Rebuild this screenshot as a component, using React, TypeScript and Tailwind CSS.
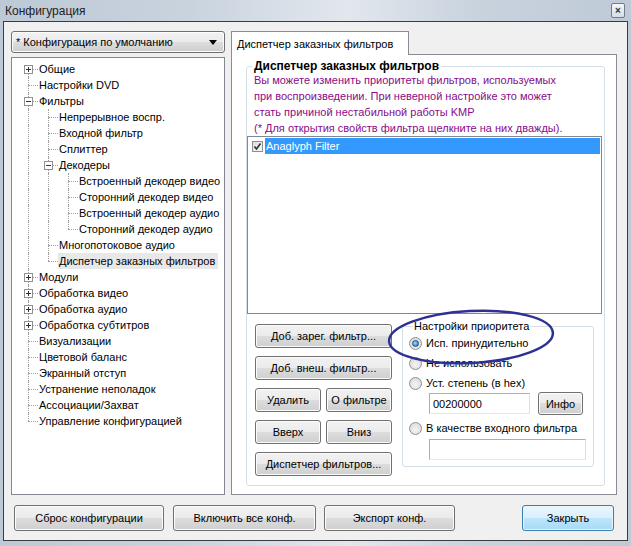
import React from 'react'

type TreeNode = { t: string; box?: '+' | '-'; sel?: boolean; c?: TreeNode[] }

type Row = {
  t: string
  depth: number
  first: boolean
  last: boolean
  anc: boolean[]
  box?: '+' | '-'
  sel?: boolean
}

const tree: TreeNode[] = [
  { t: 'Общие', box: '+' },
  { t: 'Настройки DVD' },
  {
    t: 'Фильтры',
    box: '-',
    c: [
      { t: 'Непрерывное воспр.' },
      { t: 'Входной фильтр' },
      { t: 'Сплиттер' },
      {
        t: 'Декодеры',
        box: '-',
        c: [
          { t: 'Встроенный декодер видео' },
          { t: 'Сторонний декодер видео' },
          { t: 'Встроенный декодер аудио' },
          { t: 'Сторонний декодер аудио' },
        ],
      },
      { t: 'Многопотоковое аудио' },
      { t: 'Диспетчер заказных фильтров', sel: true },
    ],
  },
  { t: 'Модули', box: '+' },
  { t: 'Обработка видео', box: '+' },
  { t: 'Обработка аудио', box: '+' },
  { t: 'Обработка субтитров', box: '+' },
  { t: 'Визуализации' },
  { t: 'Цветовой баланс' },
  { t: 'Экранный отступ' },
  { t: 'Устранение неполадок' },
  { t: 'Ассоциации/Захват' },
  { t: 'Управление конфигурацией' },
]

function flatten(nodes: TreeNode[], depth: number, anc: boolean[], out: Row[]) {
  nodes.forEach((n, i) => {
    const last = i === nodes.length - 1
    out.push({ t: n.t, depth, first: depth === 0 && i === 0, last, anc, box: n.box, sel: n.sel })
    if (n.c) flatten(n.c, depth + 1, [...anc, !last], out)
  })
  return out
}

const rows = flatten(tree, 0, [], [])

// win7 push button look
const face =
  'rounded-[3px] border border-[#707070] bg-[linear-gradient(#f2f2f2,#ebebeb_50%,#dddddd_50%,#cfcfcf)] text-black shadow-[inset_0_0_0_1px_#fcfcfc]'
const btn = `flex items-center justify-center ${face}`

function TreeRow({ row }: { row: Row }) {
  return (
    <div className="flex h-4 items-center">
      {row.anc.map((cont, i) => (
        <div key={i} className="relative h-4 w-5 shrink-0">
          {cont && <div className="absolute left-[10px] top-0 h-4 border-l border-dotted border-[#a0a0a0]" />}
        </div>
      ))}
      <div className="relative h-4 w-5 shrink-0">
        <div
          className={
            row.first
              ? 'absolute left-[10px] top-[8px] h-[8px] border-l border-dotted border-[#a0a0a0]'
              : row.last
                ? 'absolute left-[10px] top-0 h-[8px] border-l border-dotted border-[#a0a0a0]'
                : 'absolute left-[10px] top-0 h-4 border-l border-dotted border-[#a0a0a0]'
          }
        />
        <div className="absolute left-[10px] top-[8px] w-[10px] border-t border-dotted border-[#a0a0a0]" />
        {row.box && (
          <div className="absolute left-[6px] top-[4px] flex h-[9px] w-[9px] items-center justify-center border border-[#919191] bg-white">
            <div className="relative h-[5px] w-[5px]">
              <div className="absolute left-0 top-[2px] h-px w-[5px] bg-[#333]" />
              {row.box === '+' && <div className="absolute left-[2px] top-0 h-[5px] w-px bg-[#333]" />}
            </div>
          </div>
        )}
      </div>
      <span className={row.sel ? 'whitespace-nowrap bg-[#e8e8e8] pl-px pr-[3px]' : 'whitespace-nowrap px-px'}>{row.t}</span>
    </div>
  )
}

function Radio({ on, label }: { on?: boolean; label: string }) {
  return (
    <div className="flex h-5 items-center">
      <div className="flex h-[13px] w-[13px] items-center justify-center rounded-full border border-[#8e8f8f] bg-[radial-gradient(circle_at_50%_60%,#f4f4f4,#d6d6d6)]">
        {on && <div className="h-[7px] w-[7px] rounded-full border border-[#1a4a80] bg-[radial-gradient(circle_at_40%_40%,#a6d6ff,#1e6fc0)]" />}
      </div>
      <span className="ml-[4px]">{label}</span>
    </div>
  )
}

export default function App() {
  return (
    <div
      className="relative flex h-[546px] w-[631px] flex-col bg-[linear-gradient(90deg,#bdc9d6,#c9d3de_30%,#e2e7ed_55%,#c9d3de_75%,#bfcad7)] text-[11px] leading-4 text-black"
      style={{ fontFamily: '"Liberation Sans", Arial, sans-serif' }}
    >
      {/* title bar */}
      <div className="flex h-[21px] shrink-0 items-center justify-between pl-[5px] pr-[6px]">
        <span className="text-[12px] text-[#1e1e1e]">Конфигурация</span>
        <div className="flex h-[15px] w-[14px] items-center justify-center rounded-[2px] border border-[#6f7c8c] bg-[linear-gradient(#f4f6f8,#d8dee5)] text-[10px] font-bold leading-none text-[#333]">
          ×
        </div>
      </div>

      {/* frame */}
      <div className="mx-[3px] mb-[5px] flex flex-1 flex-col border border-[#3c3c3c] bg-[#f0f0f0] pb-[9px] pl-[7px] pr-[10px] pt-[9px]">
        <div className="flex flex-1 gap-[6px]">
          {/* left column */}
          <div className="flex w-[214px] flex-col gap-[4px]">
            <div className={`flex h-[22px] items-center justify-between pl-[4px] pr-[7px] ${face}`}>
              <span>* Конфигурация по умолчанию</span>
              <span className="h-0 w-0 border-x-[4px] border-t-[5px] border-x-transparent border-t-black" />
            </div>
            <div className="flex-1 border border-[#828790] bg-white pl-[6px] pt-[3px]">
              {rows.map((r, i) => (
                <TreeRow key={i} row={r} />
              ))}
            </div>
          </div>

          {/* right column */}
          <div className="flex flex-1 flex-col">
            <div className="flex h-[23px]">
              <div className="relative z-10 -mb-px flex w-[178px] items-center border border-b-0 border-[#898c95] bg-white pl-[5px]">
                Диспетчер заказных фильтров
              </div>
            </div>
            <div className="flex flex-1 flex-col border border-[#898c95] bg-white pb-[8px] pl-[14px] pr-[11px] pt-[4px]">
              <fieldset className="flex flex-1 flex-col rounded-[3px] border border-[#d5dfe5]">
                <legend className="ml-[5px] px-[2px] text-[12px] font-bold leading-[14px]">Диспетчер заказных фильтров</legend>
                <div className="-mt-px pl-[7px] leading-4 text-[#8a0a8a]">
                  <div>Вы можете изменить приоритеты фильтров, используемых</div>
                  <div>при воспроизведении. При неверной настройке это может</div>
                  <div>стать причиной нестабильной работы KMP</div>
                  <div>(* Для открытия свойств фильтра щелкните на них дважды).</div>
                </div>
                <div className="mr-[2px] h-[178px] border border-[#828790] bg-white p-px">
                  <div className="flex h-4 items-center">
                    <div className="ml-[3px] mr-[2px] flex h-[11px] w-[11px] items-center justify-center border border-[#8f8f8f] bg-[linear-gradient(135deg,#dcdcdc,#f8f8f8)]">
                      <svg width="9" height="9" viewBox="0 0 9 9">
                        <path d="M1.5 4.5 L3.5 7 L7.5 1.5" fill="none" stroke="#333" strokeWidth="1.6" />
                      </svg>
                    </div>
                    <div className="flex h-4 flex-1 items-center bg-[#3399ff] pl-px text-white">Anaglyph Filter</div>
                  </div>
                </div>

                <div className="mt-[10px] flex items-start pl-[8px]">
                  <div className="flex w-[137px] flex-col gap-[8px]">
                    <div className={`${btn} h-[24px]`}>Доб. зарег. фильтр...</div>
                    <div className={`${btn} h-[24px]`}>Доб. внеш. фильтр...</div>
                    <div className="flex gap-[5px]">
                      <div className={`${btn} h-[24px] w-[66px]`}>Удалить</div>
                      <div className={`${btn} h-[24px] flex-1`}>О фильтре</div>
                    </div>
                    <div className="flex gap-[5px]">
                      <div className={`${btn} h-[24px] w-[66px]`}>Вверх</div>
                      <div className={`${btn} h-[24px] flex-1`}>Вниз</div>
                    </div>
                    <div className={`${btn} h-[24px]`}>Диспетчер фильтров...</div>
                  </div>

                  <fieldset className="-mt-[6px] ml-[10px] w-[192px] rounded-[3px] border border-[#d5dfe5] pb-[6px] pl-[6px]">
                    <legend className="ml-[4px] px-px">Настройки приоритета</legend>
                    <div className="-mt-px">
                      <Radio on label="Исп. принудительно" />
                      <Radio label="Не использовать" />
                      <Radio label="Уст. степень (в hex)" />
                    </div>
                    <div className="-mt-px flex h-[23px] items-center pl-[20px]">
                      <div className="flex h-[21px] w-[101px] items-center border border-[#abadb3] border-b-[#e3e9ef] border-r-[#dbdfe6] bg-white pl-[3px]">
                        00200000
                      </div>
                      <div className={`${btn} ml-[8px] h-[23px] w-[45px]`}>Инфо</div>
                    </div>
                    <div className="mt-[3px]">
                      <Radio label="В качестве входного фильтра" />
                    </div>
                    <div className="ml-[20px] mt-px h-[21px] w-[157px] border border-[#abadb3] border-b-[#e3e9ef] border-r-[#dbdfe6] bg-white" />
                  </fieldset>
                </div>
              </fieldset>
            </div>
          </div>
        </div>

        {/* bottom buttons */}
        <div className="mt-[10px] flex h-[26px] pl-[3px] pr-[3px]">
          <div className={`${btn} w-[150px]`}>Сброс конфигурации</div>
          <div className={`${btn} ml-[9px] w-[143px]`}>Включить все конф.</div>
          <div className={`${btn} ml-[8px] w-[131px]`}>Экспорт конф.</div>
          <div className="ml-auto flex w-[92px] items-center justify-center rounded-[3px] border border-[#3c7fb1] bg-[linear-gradient(#eaf6fd,#d9f0fc_50%,#bee6fd_50%,#a7d9f5)] shadow-[inset_0_0_0_1px_#e6f5fd]">
            Закрыть
          </div>
        </div>
      </div>

      {/* hand drawn annotation */}
      <svg className="pointer-events-none absolute left-[380px] top-[305px]" width="185" height="70" viewBox="0 0 185 70">
        <ellipse cx="91" cy="32" rx="82" ry="26" transform="rotate(-3 91 32)" fill="none" stroke="#2d3192" strokeWidth="2.5" />
      </svg>
    </div>
  )
}
